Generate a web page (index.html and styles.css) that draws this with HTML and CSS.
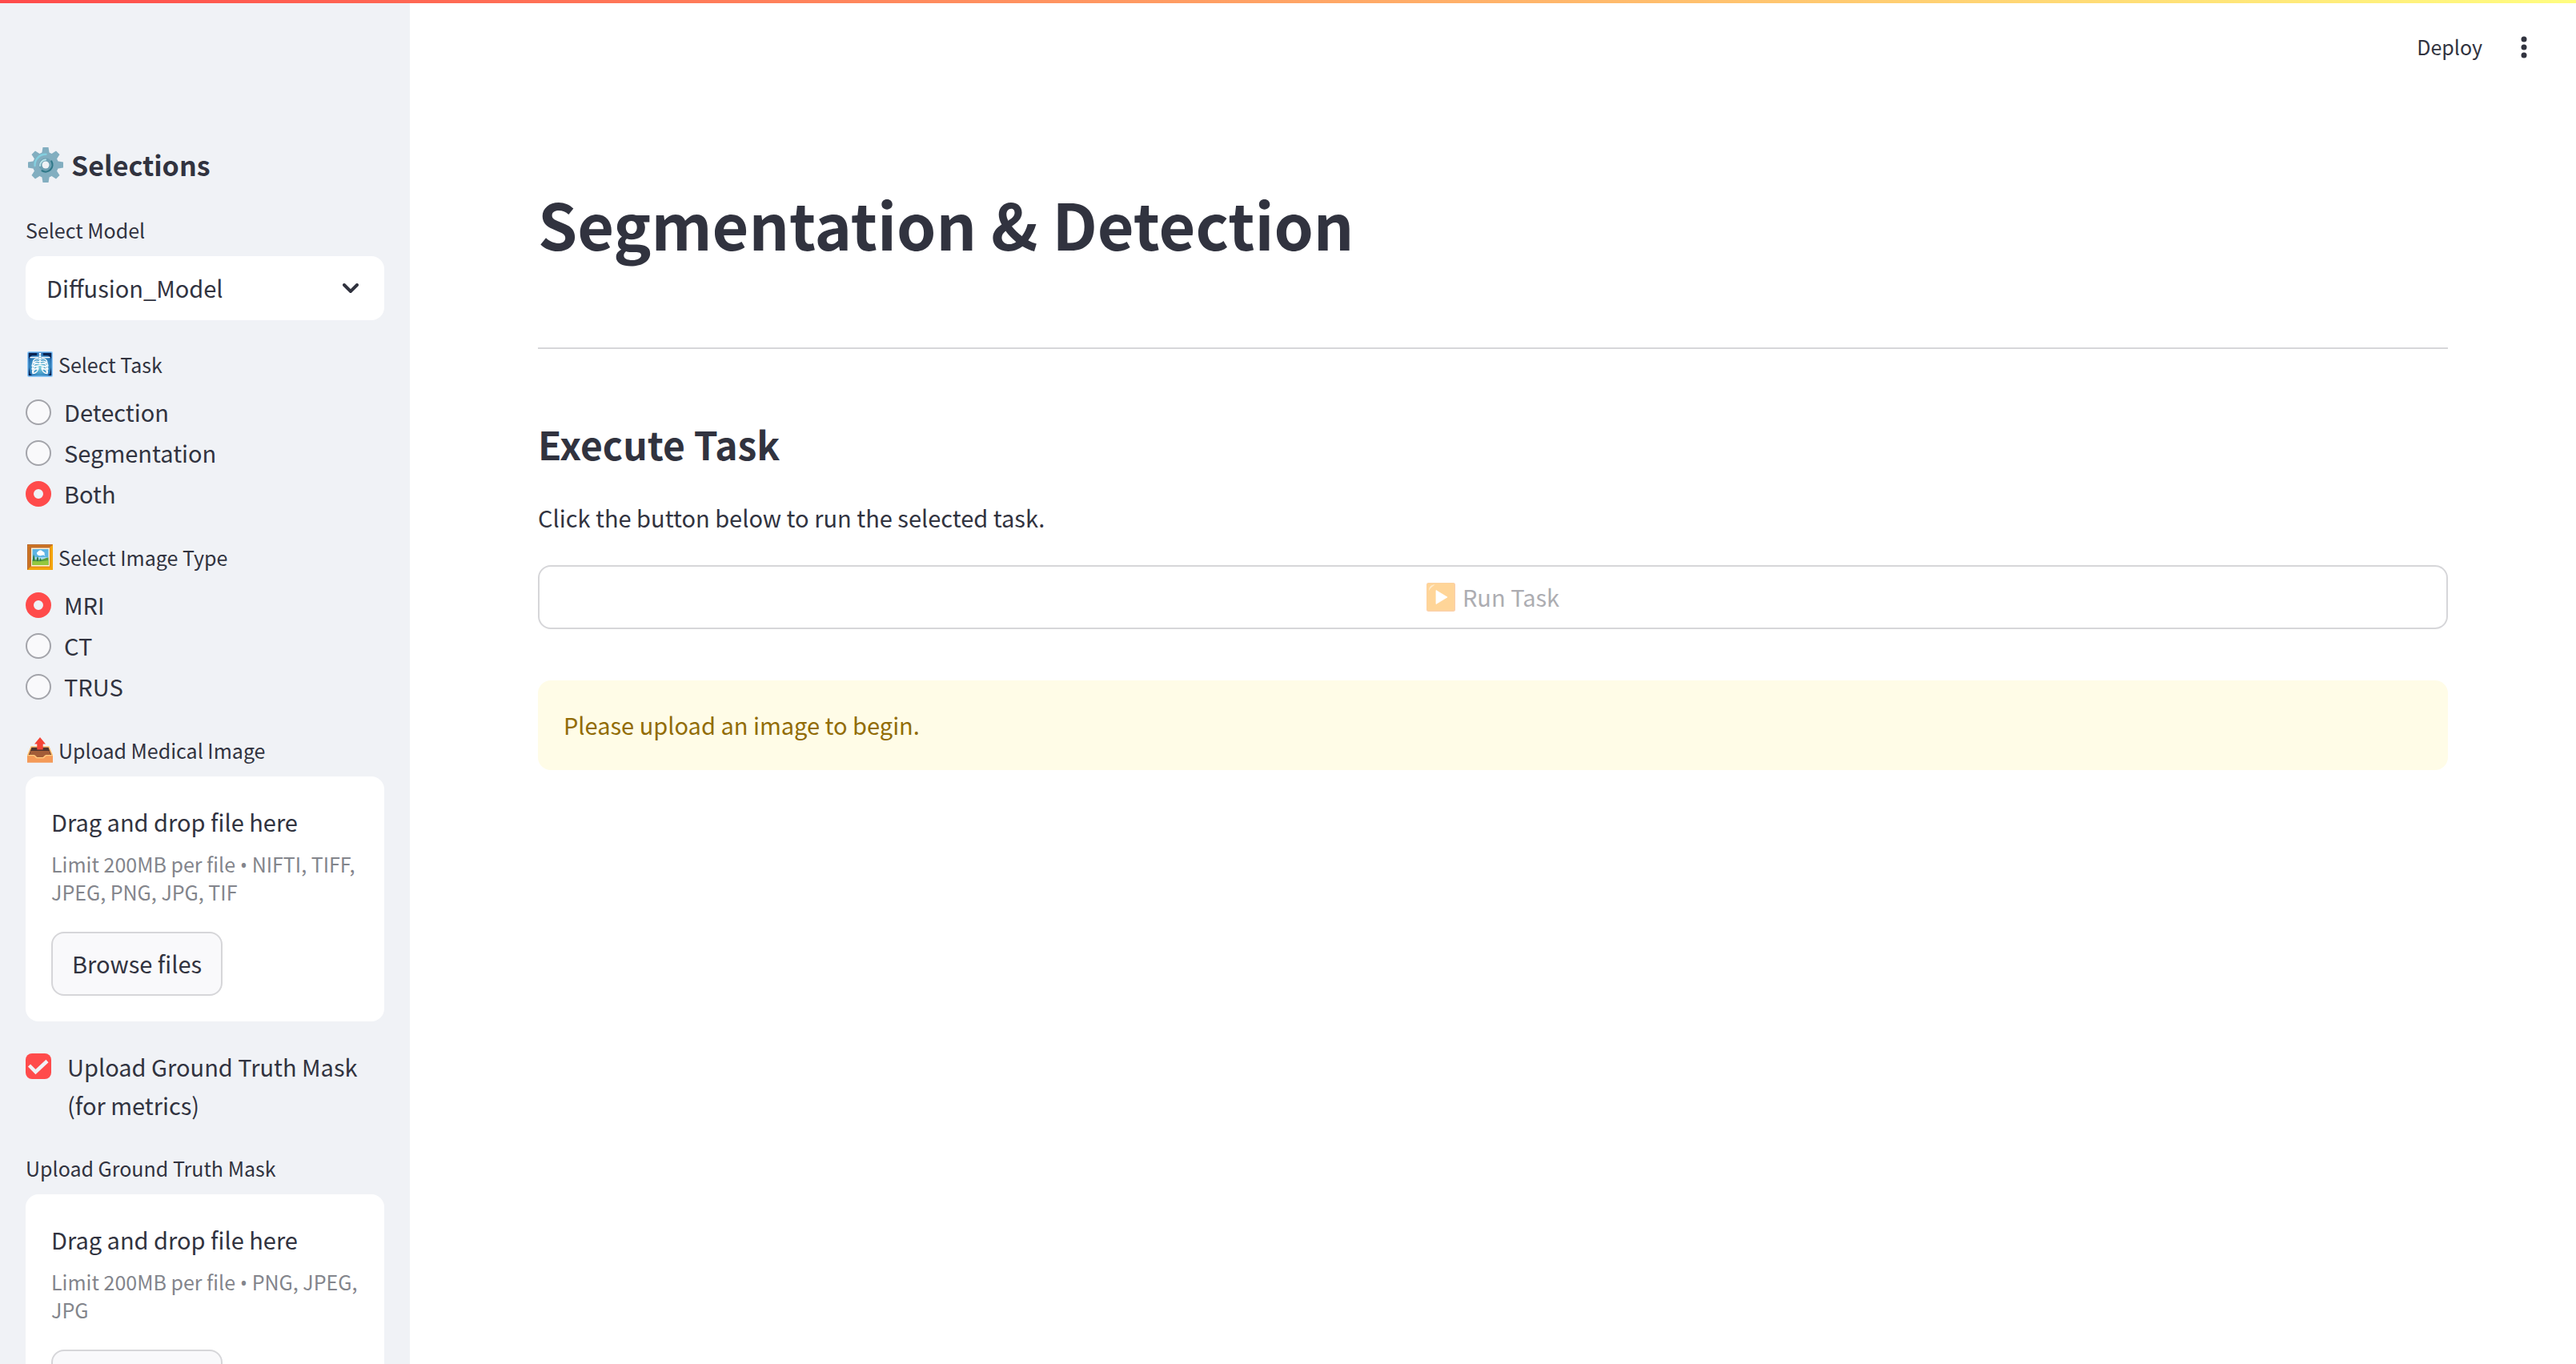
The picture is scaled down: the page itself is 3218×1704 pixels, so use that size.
FILE: index.html
```html
<!DOCTYPE html>
<html lang="en">
<head>
<meta charset="utf-8">
<meta name="viewport" content="width=device-width, initial-scale=1">
<title>Segmentation &amp; Detection</title>
<link rel="stylesheet" href="styles.css">
</head>
<body>
<div class="decoration"></div>
<div class="app">
  <aside class="sidebar">
    <h2 class="sidebar-title">
      <svg class="icon-gear" viewBox="0 0 44 44" aria-hidden="true">
        <g fill="#82aec0">
          <circle cx="22" cy="22" r="16"/>
          <path d="M18.500 0h7l1.500 9H17z"/>
          <path d="M18.500 44h7l1.500-9H17z"/>
          <path d="M0 18.500v7l9 1.500V17z"/>
          <path d="M44 18.500v7l-9 1.500V17z"/>
          <path d="M9 4.500 16 9l-7 7-4.500-7z"/>
          <path d="M35 4.500 28 9l7 7 4.500-7z"/>
          <path d="M9 39.500 16 35l-7-7-4.500 7z"/>
          <path d="M35 39.500 28 35l7-7 4.500 7z"/>
        </g>
        <path d="M8.500 23A13.500 13.500 0 0 1 22.500 8.800" fill="none" stroke="#84cfdf" stroke-width="2.400" stroke-linecap="round"/>
        <circle cx="22" cy="22" r="8.500" fill="#6fa0b3"/>
        <path d="M29.300 17.500A8.600 8.600 0 0 1 17.500 29.300" fill="none" stroke="#2f7889" stroke-width="2.200" stroke-linecap="round"/>
        <path d="M15 23A7.500 7.500 0 0 1 22 15.500" fill="none" stroke="#b9e4ea" stroke-width="2" stroke-linecap="round"/>
        <circle cx="22" cy="22" r="4.500" fill="#f0f2f6"/>
      </svg>
      Selections
    </h2>

    <div class="widget">
      <label class="widget-label" for="model">Select Model</label>
      <div class="select-box">
        <select id="model"><option>Diffusion_Model</option><option>Segmentation_Model</option></select>
        <svg class="chevron" viewBox="0 0 20 12" aria-hidden="true"><path d="M2 2l8 8 8-8" fill="none" stroke="#31333f" stroke-width="4" stroke-linecap="round"/></svg>
      </div>
    </div>

    <fieldset class="widget">
      <legend class="widget-label">
        <svg class="icon" viewBox="0 0 32 32" aria-hidden="true">
          <defs><radialGradient id="xray" cx=".5" cy=".6" r=".6"><stop offset="0" stop-color="#7fd0dd"/><stop offset=".6" stop-color="#3a8fc4"/><stop offset="1" stop-color="#1c5ea8"/></radialGradient></defs>
          <rect x=".700" y=".700" width="30.600" height="30.600" rx="1.500" fill="url(#xray)" stroke="#90caf9" stroke-width="1.400"/>
          <path d="M2 2h10v3H6L3.500 7 2 9zM30 2H20v3h6l2.500 2L30 9zM2 20l1.500 8L6 30H2zM30 20l-1.500 8L26 30h4z" fill="#0b2350"/>
          <path d="M16 2v16" stroke="#fff" stroke-width="2.600" stroke-dasharray="2.400 .600"/>
          <g fill="none" stroke="#fff" stroke-width="1.300" stroke-linecap="round">
            <path d="M14 7.500H4M18 7.500h10"/>
            <path d="M14.500 9.500C10 8 7.500 11 7 14M14.500 12.500C10 11 6.500 14 6 18M14.500 15.500C10 14 6.500 17 6 22M14.500 18C10 17.500 6.500 20 6.500 26M14 20.500c-3 .5-6.500 3-7 7 3.500 0 7-3 7-7M7 14l6 1M6 18l7 1M6 22l6.500 0"/>
            <path d="M17.500 9.500C22 8 24.500 11 25 14M17.500 12.500C22 11 25.500 14 26 18M17.500 15.500C22 14 25.500 17 26 22M17.500 18c4.500-.5 8 2 8 8M18 20.500c3 .5 6.500 3 7 7-3.500 0-7-3-7-7M25 14l-6 1M26 18l-7 1M26 22l-6.500 0"/>
          </g>
        </svg>
        Select Task
      </legend>
      <label class="choice"><input type="radio" name="task">Detection</label>
      <label class="choice"><input type="radio" name="task">Segmentation</label>
      <label class="choice"><input type="radio" name="task" checked>Both</label>
    </fieldset>

    <fieldset class="widget">
      <legend class="widget-label">
        <svg class="icon" viewBox="0 0 32 32" aria-hidden="true">
          <rect width="32" height="32" fill="#f4a60c"/>
          <path d="M0 0h32l-3 3H3v26l-3 3z" fill="#b9652c"/>
          <path d="M1 1h30l-1.500 1.500H2.500v27L1 31z" fill="#d27a1e"/>
          <path d="M29 3v26H3l2-2h22V5z" fill="#e58a1a"/>
          <path d="M3 3h26l-2 2H5v22l-2 2z" fill="#c06c2c"/>
          <rect x="5" y="4.500" width="23" height="23" fill="#fff3d6"/>
          <rect x="6.500" y="6" width="20" height="20" fill="#5db4e4"/>
          <path d="M6.500 16h20v4h-20z" fill="#a5d8ee"/>
          <path d="M12 12a2.500 2.500 0 0 1 1.500-3 3.500 3.500 0 0 1 6 0 2.500 2.500 0 0 1 2 3.500l1 2.500c-2-2-3-1.500-5-1-2 .5-4 0-5.500-2z" fill="#fff"/>
          <path d="M6.500 19c5 0 8 1.500 12 0 3-1 5-2.500 8-2.500V26h-20z" fill="#5a9e3c"/>
          <path d="M6.500 21c6 0 10 1 20-1v6h-20z" fill="#93c83e"/>
          <path d="M8 12.500l1.500 4.500v3.500H7V17zM13 15l1.200 3v3h-2.500v-3zM16.500 17l1 2v2h-2v-2z" fill="#2e7d46"/>
        </svg>
        Select Image Type
      </legend>
      <label class="choice"><input type="radio" name="type" checked>MRI</label>
      <label class="choice"><input type="radio" name="type">CT</label>
      <label class="choice"><input type="radio" name="type">TRUS</label>
    </fieldset>

    <section class="widget" aria-labelledby="image-label">
      <h3 class="widget-label" id="image-label">
        <svg class="icon" viewBox="0 0 32 32" aria-hidden="true">
          <path d="M5 12h22l5 11v8.500H0V23z" fill="#f49a58"/>
          <path d="M5.500 12.500h21L30 22H2z" fill="#4e342e"/>
          <path d="M4.500 17h23l2 5.500H22l-3 3h-6l-3-3H2.500z" fill="#a35d38"/>
          <path d="M.500 23 5 11.800h22L31.500 23" fill="none" stroke="#ffc070" stroke-width="1.300"/>
          <path d="M0 22.500h8.500l3 3h9l3-3H32V31.500H0z" fill="#f49a58"/>
          <path d="M0 22.700h8.500l3 3h9l3-3H32" fill="none" stroke="#ffcc80" stroke-width="1.200"/>
          <path d="M16 0l7 8.500h-3.300V15.500h-7.400V8.500H9z" fill="#f44336"/>
        </svg>
        Upload Medical Image
      </h3>
      <div class="dropzone">
        <div class="drop-title">Drag and drop file here</div>
        <div class="drop-hint">Limit 200MB per file <span class="dot">•</span> NIFTI, TIFF, JPEG, PNG, JPG, TIF</div>
        <button class="button browse" type="button">Browse files</button>
      </div>
    </section>

    <label class="check">
      <input type="checkbox" checked>
      <span>Upload Ground Truth Mask (for metrics)</span>
    </label>

    <section class="widget" aria-labelledby="mask-label">
      <h3 class="widget-label" id="mask-label">Upload Ground Truth Mask</h3>
      <div class="dropzone">
        <div class="drop-title">Drag and drop file here</div>
        <div class="drop-hint">Limit 200MB per file <span class="dot">•</span> PNG, JPEG, JPG</div>
        <button class="button browse" type="button">Browse files</button>
      </div>
    </section>
  </aside>

  <div class="main">
    <header class="toolbar">
      <button class="deploy" type="button">Deploy</button>
      <button class="menu" type="button" aria-label="Main menu">
        <svg viewBox="0 0 8 28" aria-hidden="true"><g fill="#31333f"><circle cx="4" cy="4" r="3.500"/><circle cx="4" cy="14" r="3.500"/><circle cx="4" cy="24" r="3.500"/></g></svg>
      </button>
    </header>
    <main class="content">
      <h1>Segmentation &amp; Detection</h1>
      <hr>
      <h2 class="section-title">Execute Task</h2>
      <p class="intro">Click the button below to run the selected task.</p>
      <button class="button run" type="button" disabled>
        <svg class="icon-play" viewBox="0 0 36 36" aria-hidden="true">
          <rect width="36" height="36" rx="2.500" fill="#f78c2a"/>
          <rect x=".500" y=".500" width="34" height="34" rx="2.500" fill="#ff9800"/>
          <path d="M3 10c0-5 2.500-7.500 7.500-7.500C8 4.500 5 6 3 10z" fill="#ffcc80"/>
          <path d="M12 9.500v17L26 18z" fill="#fff" stroke="#fff" stroke-width=".800" stroke-linejoin="round"/>
        </svg>
        Run Task
      </button>
      <div class="alert" role="alert">Please upload an image to begin.</div>
    </main>
  </div>
</div>
</body>
</html>
```
FILE: styles.css
```css
* { box-sizing: border-box; }

body {
  margin: 0;
  background: #fff;
  color: #31333f;
  font-family: "Noto Sans CJK SC", "Noto Sans", sans-serif;
  font-size: 29px;
  line-height: 48px;
}

h1, h2, h3, p, fieldset, legend { margin: 0; padding: 0; border: 0; }
button, select, input { margin: 0; font: inherit; color: inherit; }
svg { display: block; flex: none; }

.decoration {
  position: absolute;
  inset: 0 0 auto;
  height: 4px;
  background: linear-gradient(90deg, #ff4b4b, #fffd80);
}

.app { display: flex; height: 100vh; overflow: hidden; }

/* Sidebar */
.sidebar {
  flex: 0 0 512px;
  display: flex;
  flex-direction: column;
  gap: 32px;
  padding: 182px 32px 96px;
  overflow-y: auto;
  scrollbar-width: none;
  background: #f0f2f6;
}
.sidebar > * { flex: none; }

.sidebar-title {
  display: flex;
  align-items: center;
  gap: 10px;
  padding: 0 0 2px 3px;
  font-size: 34px;
  font-weight: 600;
  line-height: 48px;
}
.icon-gear { width: 44px; height: 44px; }

.widget { min-width: 0; }
.widget-label {
  display: flex;
  align-items: center;
  gap: 7px;
  margin-bottom: 10px;
  font-size: 25px;
  font-weight: 400;
  line-height: 46px;
}
.icon { width: 32px; height: 32px; margin-left: 2px; }

.select-box { display: grid; align-items: center; }
.select-box > * { grid-area: 1 / 1; }
.select-box select {
  appearance: none;
  width: 100%;
  height: 80px;
  padding: 0 64px 2px 26px;
  border: 0;
  border-radius: 16px;
  background: #fff;
}
.chevron { width: 20px; height: 12px; margin-right: 32px; justify-self: end; pointer-events: none; }

.choice { display: flex; align-items: center; gap: 16px; height: 51px; }
.choice input {
  appearance: none;
  width: 32px;
  height: 32px;
  margin-top: 3px;
  border: 2px solid #a3a4aa;
  border-radius: 50%;
  background: #f9f9fb;
}
.choice input:checked { border: 10px solid #ff4b4b; background: #f0f2f6; }

.dropzone {
  padding: 32px;
  border-radius: 16px;
  background: #fff;
}
.drop-hint {
  margin: 12px 0 32px;
  color: #83858c;
  font-size: 25px;
  line-height: 35px;
}
.dot { font-family: "Open Sans", "Liberation Sans", sans-serif; line-height: 1; }

.button {
  display: flex;
  align-items: center;
  justify-content: center;
  height: 80px;
  padding: 0 24px 2px;
  border: 2px solid #d6d6d9;
  border-radius: 16px;
  background: #fff;
}
.browse { background: #f9f9fb; }

.check { display: flex; gap: 20px; }
.check input {
  appearance: none;
  flex: none;
  width: 32px;
  height: 32px;
  margin-top: 8px;
  border-radius: 8px;
  background: #ff4b4b;
}
.check input:checked {
  background: #ff4b4b url("data:image/svg+xml,%3Csvg xmlns='http://www.w3.org/2000/svg' viewBox='0 0 32 32'%3E%3Cpath d='M4.500 15l8 8L27 9.500' fill='none' stroke='%23f0f2f6' stroke-width='4.500'/%3E%3C/svg%3E") center / 32px no-repeat;
}

/* Main area */
.main { flex: 1; min-width: 0; overflow-y: auto; }

.toolbar {
  display: flex;
  align-items: center;
  justify-content: flex-end;
  gap: 48px;
  height: 118px;
  padding-right: 61px;
}
.deploy, .menu { padding: 0; border: 0; background: none; }
.deploy { padding-bottom: 2px; font-size: 25px; }
.menu svg { width: 8px; height: 28px; }

.content {
  display: flex;
  flex-direction: column;
  padding: 108px 160px;
}
h1 { font-size: 79px; font-weight: 700; line-height: 106px; }
hr { width: 100%; height: 2px; margin: 102px 0 84px; border: 0; background: #d6d6d9; }
.section-title { font-size: 48px; font-weight: 600; line-height: 68px; }
.intro { margin: 34px 0 36px; }
.run { width: 100%; gap: 9px; color: #adadb2; }
.icon-play { width: 36px; height: 36px; margin-top: 2px; opacity: .4; }
.alert {
  margin-top: 64px;
  padding: 31px 32px 33px;
  border-radius: 16px;
  background: #fffce7;
  color: #926c05;
}
```
